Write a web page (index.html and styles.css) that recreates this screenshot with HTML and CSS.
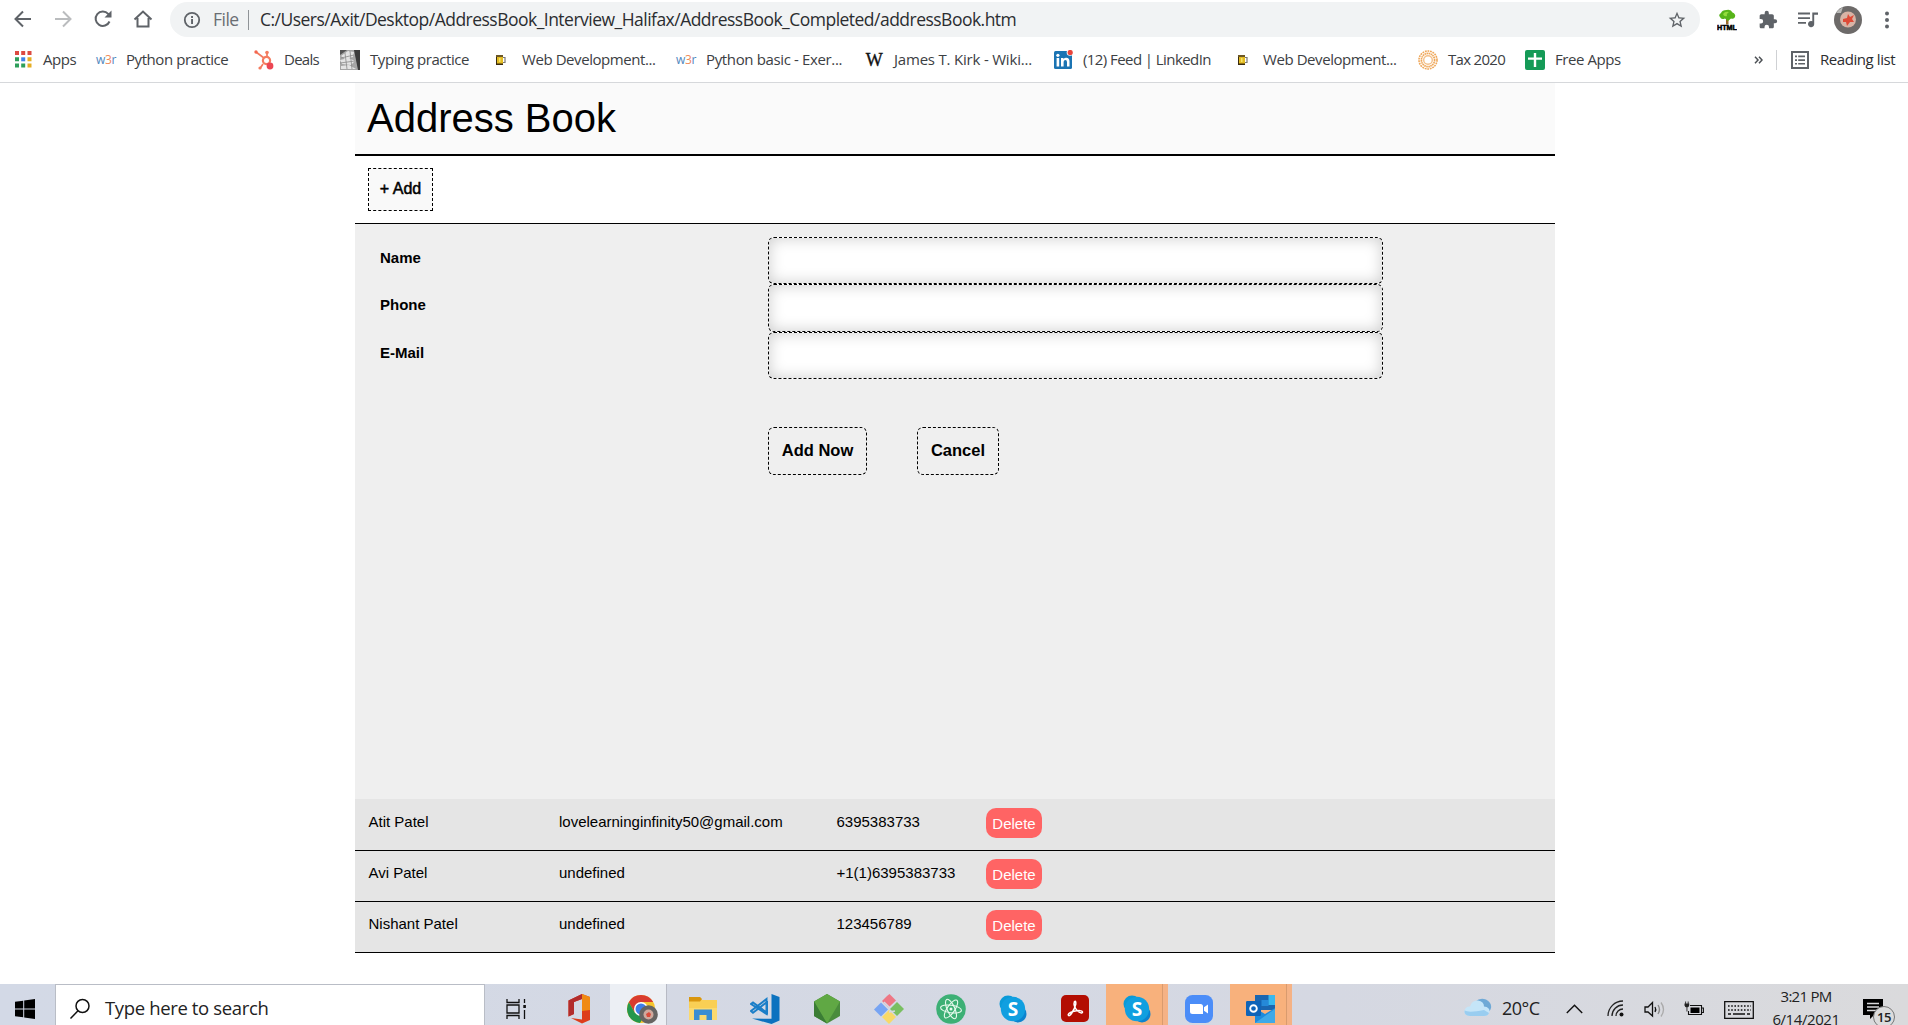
FILE: index.html
```html
<!DOCTYPE html>
<html lang="en">
<head>
<meta charset="utf-8">
<title>Address Book</title>
<link rel="stylesheet" href="styles.css">
</head>
<body>
<div class="screen">
  <header class="browser">
    <div class="toolbar">
      <div class="nav-icons">
        <svg width="20" height="20" viewBox="0 0 20 20" fill="none" stroke="#5f6368" stroke-width="2"><path d="M18 10H3M10 2.500L2.500 10L10 17.500"/></svg>
        <svg width="20" height="20" viewBox="0 0 20 20" fill="none" stroke="#babcbe" stroke-width="2"><path d="M2 10H17M10 2.500L17.500 10L10 17.500"/></svg>
        <svg width="20" height="20" viewBox="0 0 20 20" fill="none" stroke="#5f6368" stroke-width="2"><path d="M16.500 12.500A7.200 7.200 0 1 1 15.200 4.900L17 7"/><path d="M18.500 1.500V8.500H11.500Z" fill="#5f6368" stroke="none"/></svg>
        <svg width="20" height="20" viewBox="0 0 20 20" fill="none" stroke="#5f6368" stroke-width="2"><path d="M1.500 10.500L10 2.500L18.500 10.500M4.500 9V17.500H15.500V9"/></svg>
      </div>
      <div class="omnibox">
        <svg width="18" height="18" viewBox="0 0 18 18"><circle cx="9" cy="9" r="7.200" fill="none" stroke="#5f6368" stroke-width="1.800"/><path d="M8.100 8h1.900v5H8.100zM8.100 5h1.900v1.900H8.100z" fill="#5f6368"/></svg>
        <span class="scheme">File</span>
        <span class="bar"></span>
        <span class="url">C:/Users/Axit/Desktop/AddressBook_Interview_Halifax/AddressBook_Completed/addressBook.htm</span>
        <svg class="star" width="20" height="20" viewBox="0 0 24 24" fill="#5f6368"><path d="M22 9.240l-7.190-.620L12 2 9.190 8.630 2 9.240l5.460 4.730L5.820 21 12 17.270 18.180 21l-1.630-7.030L22 9.240zM12 15.400l-3.760 2.270 1-4.280-3.320-2.880 4.380-.380L12 6.100l1.710 4.040 4.380.380-3.320 2.880 1 4.280L12 15.400z"/></svg>
      </div>
      <div class="ext-icons">
        <svg width="20" height="22" viewBox="0 0 20 22"><path d="M9 8h2.500v7.500H9z" fill="#9b6a2a"/><path d="M3 8Q1 6 4 4Q5 1 9.500 1Q14 0 15.500 3.500Q19 5 18 8Q17 10.500 14 9.500L11 12 8 9.500Q4 11 3 8Z" fill="#57b41a"/><path d="M6 5Q8 2 12 3Q9 5 10 7Q7 8 6 5Z" fill="#93dd3d"/><text x="0" y="20.500" textLength="20" lengthAdjust="spacingAndGlyphs" class="html-tag">HTML</text></svg>
        <svg width="20" height="20" viewBox="0 0 24 24" fill="#5f6368"><path d="M20.500 11H19V7c0-1.100-.900-2-2-2h-4V3.500a2.500 2.500 0 0 0-5 0V5H4c-1.100 0-2 .900-2 2v3.800h1.500a2.700 2.700 0 0 1 0 5.400H2V20c0 1.100.900 2 2 2h3.800v-1.500a2.700 2.700 0 0 1 5.400 0V22H17c1.100 0 2-.900 2-2v-4h1.500a2.500 2.500 0 0 0 0-5z"/></svg>
        <svg width="20" height="18" viewBox="0 0 20 18" fill="#5f6368"><path d="M0 1.500h12v1.900H0zM0 6.200h12v1.900H0zM0 10.900h8v1.900H0z"/><path d="M14.300 1.500H20v2.200h-3.800v9.500a3.100 3.100 0 1 1-1.900-2.900z"/></svg>
        <svg width="28" height="28" viewBox="0 0 28 28"><circle cx="14" cy="14" r="14" fill="#6d6a69"/><path d="M2 7Q5 3 9 1L7 7Z" fill="#b9b9b7"/><circle cx="14" cy="13.500" r="8" fill="#d8b3a5"/><path d="M9 13l4-1 1-4 2 3 4-2-2 4 2 3-4 0-3 4-1-4-3 0z" fill="#de4a37"/></svg>
        <svg width="6" height="20" viewBox="0 0 6 20" fill="#5f6368"><circle cx="3" cy="3.500" r="2"/><circle cx="3" cy="10" r="2"/><circle cx="3" cy="16.500" r="2"/></svg>
      </div>
    </div>
    <nav class="bookmarks">
      <a class="bm"><svg width="20" height="20" viewBox="0 0 20 20"><path d="M2 1h4v4H2z M8.200 1h4v4h-4z M14.500 1h4v4h-4z" fill="#dc4a42"/><path d="M2 7.300h4v4H2zM2 13.600h4v4H2zM8.200 13.600h4v4h-4z" fill="#2d9f5b"/><path d="M8.200 7.300h4v4h-4z" fill="#3f83e8"/><path d="M14.500 7.300h4v4h-4zM14.500 13.600h4v4h-4z" fill="#e5ad23"/></svg><span>Apps</span></a>
      <a class="bm"><b class="w3r">w<i>3</i>r</b><span>Python practice</span></a>
      <a class="bm"><svg width="20" height="20" viewBox="0 0 20 20" fill="none" stroke="#f47b5f" stroke-width="1.700"><path d="M2 2L10 8M13 2.500V7M9 14L6 18.500"/><circle cx="12.500" cy="10.500" r="3.600" stroke-width="2.200"/><circle cx="2" cy="2" r="1.700" fill="#f4664f" stroke="none"/><circle cx="13" cy="2.500" r="1.800" fill="#f47b5f" stroke="none"/><circle cx="6" cy="18" r="1.600" fill="#f47b5f" stroke="none"/><circle cx="16" cy="16" r="3.400" fill="#ec4653" stroke="none"/></svg><span class="deals">Deals</span></a>
      <a class="bm"><svg width="20" height="20" viewBox="0 0 20 20"><path d="M0 0h20v20H0z" fill="#a5a5a5"/><path d="M14 0h6v20h-2z" fill="#3b3b3b"/><path d="M0 0h7L0 5z" fill="#555"/><path d="M1 6L8 1l6 1-1 5-8 2zM0 10l9-2 6 3-4 4-9-1zM1 16l8-1 7 4H1z" fill="#e4e4e4"/><path d="M5 3l2 16M1 8l13-3M0 13l15-2M10 1l2 18" stroke="#8a8a8a" stroke-width=".8" fill="none"/></svg><span>Typing practice</span></a>
      <a class="bm"><svg width="20" height="20" viewBox="0 0 20 20"><path d="M11 7.500h2v5h-2" fill="none" stroke="#777" stroke-width="1.200"/><path d="M4 5h7v10H4z" fill="#e3bb22"/><path d="M4 5h7v2H4z" fill="#6c5725"/><path d="M4 13.500h7V15H4zM4 7h1v7H4z" fill="#3a2b0e"/><path d="M7 8h1.500v4H7z" fill="#f6e46a"/></svg><span>Web Development...</span></a>
      <a class="bm"><b class="w3r">w<i>3</i>r</b><span class="py">Python basic - Exer...</span></a>
      <a class="bm"><b class="wiki">W</b><span class="kirk">James T. Kirk - Wiki...</span></a>
      <a class="bm"><svg width="20" height="20" viewBox="0 0 20 20"><rect x="1" y="1" width="18" height="18" rx="1.500" fill="#1b74b3"/><path d="M3.600 8h2.600v8.400H3.600zM8 8h2.500v1.200Q11.500 7.700 13.300 7.800Q16.500 8 16.500 11.500V16.400H14v-4.500Q14 10 12.400 10Q10.600 10 10.600 12V16.400H8z" fill="#fff"/><circle cx="4.900" cy="5.300" r="1.600" fill="#fff"/><circle cx="17" cy="2.500" r="3.300" fill="#fff"/><circle cx="17.200" cy="2.500" r="2.600" fill="#e8453c"/></svg><span class="feed">(12) Feed | LinkedIn</span></a>
      <a class="bm"><svg width="20" height="20" viewBox="0 0 20 20"><path d="M12 7.500h2v5h-2" fill="none" stroke="#777" stroke-width="1.200"/><path d="M5 5h7v10H5z" fill="#e3bb22"/><path d="M5 5h7v2H5z" fill="#6c5725"/><path d="M5 13.500h7V15H5zM5 7h1v7H5z" fill="#3a2b0e"/><path d="M8 8h1.500v4H8z" fill="#f6e46a"/></svg><span>Web Development...</span></a>
      <a class="bm"><svg width="20" height="20" viewBox="0 0 20 20" fill="none" stroke="#efa759"><circle cx="10" cy="10" r="9" stroke-width="1.600" stroke-dasharray="1.800 .8"/><circle cx="10" cy="10" r="6.600" stroke-width="1.700" stroke-dasharray="1.600 .5"/><circle cx="10" cy="10" r="4.300" stroke-width="1.400" stroke="#f3c08a"/></svg><span class="tax">Tax 2020</span></a>
      <a class="bm"><svg width="20" height="20" viewBox="0 0 20 20"><rect width="20" height="20" rx="2" fill="#159a57"/><path d="M8.800 3h2.400v14H8.800zM3 7.500h14v2.300H3z" fill="#fff"/></svg><span>Free Apps</span></a>
      <div class="bm-end">
        <svg width="9" height="8" viewBox="0 0 9 8" fill="none" stroke="#4d5156" stroke-width="1.500"><path d="M1 .8L4 4L1 7.200M5 .8L8 4L5 7.200"/></svg>
        <span class="sep"></span>
        <svg width="18" height="18" viewBox="0 0 18 18" fill="#5f6368"><path d="M0 0h18v18H0zM2 2v14h14V2z" fill-rule="evenodd"/><path d="M4 4.500h2v1.700H4zM4 8.200h2v1.700H4zM4 11.900h2v1.700H4zM7.200 4.500H14v1.700H7.200zM7.200 8.200H14v1.700H7.200zM7.200 11.900H14v1.700H7.200z"/></svg>
        <span class="rl">Reading list</span>
      </div>
    </nav>
  </header>

  <main class="page">
    <h1 class="title">Address Book</h1>
    <div class="actions"><button class="add" type="button">+ Add</button></div>
    <form class="entry">
      <label for="name">Name</label><input id="name" type="text">
      <label for="phone">Phone</label><input id="phone" type="text">
      <label for="email">E-Mail</label><input id="email" type="text">
      <div class="form-buttons">
        <button type="button">Add Now</button>
        <button type="button">Cancel</button>
      </div>
    </form>
    <section class="list">
      <div class="row"><span>Atit Patel</span><span>lovelearninginfinity50@gmail.com</span><span>6395383733</span><button type="button">Delete</button></div>
      <div class="row"><span>Avi Patel</span><span>undefined</span><span>+1(1)6395383733</span><button type="button">Delete</button></div>
      <div class="row"><span>Nishant Patel</span><span>undefined</span><span>123456789</span><button type="button">Delete</button></div>
    </section>
  </main>

  <footer class="taskbar">
    <div class="start"><svg width="20" height="20" viewBox="0 0 20 20"><path d="M0 2.800L8.200 1.700V9.500H0zM9.200 1.500L20 0V9.500H9.200zM0 10.500H8.200V18.300L0 17.200zM9.200 10.500H20V20L9.200 18.500z"/></svg></div>
    <div class="search">
      <svg width="22" height="22" viewBox="0 0 22 22" fill="none" stroke="#111" stroke-width="1.500"><circle cx="13.500" cy="8" r="6.500"/><path d="M9 12.800L1.500 20.500"/></svg>
      <span>Type here to search</span>
    </div>
    <div class="apps">
      <div class="app"><svg width="20" height="20" viewBox="0 0 20 20" fill="none" stroke="#111" stroke-width="1.300"><path d="M1 0V3.500H13V0M1 20V16.500H13V20M1 6H13V14H1zM18.500 0V4M18.500 11V20"/><path d="M17.300 6h2.600v3h-2.600z" fill="#111" stroke="none"/></svg></div>
      <div class="app"><svg width="24" height="30" viewBox="0 0 24 30"><path d="M15 0L23 3V26L15 29.500L4 24L15 25.500V5L7 8V20L1.500 22.500V6.500Z" fill="#dd3d1b"/><path d="M15 0L23 3V16L15 17Z" fill="#f08a13"/><path d="M15 0L1.500 6.500V22.500L7 20V8L15 5Z" fill="#b22c2c"/></svg></div>
      <div class="app active"><svg width="32" height="30" viewBox="0 0 32 30"><circle cx="15" cy="15" r="14" fill="#f7c52d"/><path d="M2.800 8.200A14 14 0 0 1 27.200 8H15L9 19Z" fill="#d93b2f"/><path d="M2.800 8.200A14 14 0 0 0 14 29L20 19H9Z" fill="#24974d"/><circle cx="15" cy="15" r="7" fill="#fff"/><circle cx="15" cy="15" r="5.500" fill="#3f7ee8"/><circle cx="22.500" cy="20.500" r="9.300" fill="#666462"/><circle cx="22.500" cy="20.500" r="5" fill="#cfa99d"/><path d="M20 20l3-2 2 2-1 3-3 0z" fill="#d94b3a"/></svg></div>
      <div class="app"><svg width="28" height="26" viewBox="0 0 28 26"><path d="M0 1H11L13 4H28V24H0z" fill="#f9cf54"/><path d="M0 1H11L13 3L11 5.500H0z" fill="#d9960e"/><path d="M0 12H28V24H0z" fill="#fbd96e"/><path d="M5 24V13.500H23V24H17.500V19H10.500V24z" fill="#3a8dd2"/></svg></div>
      <div class="app"><svg width="30" height="30" viewBox="0 0 30 30"><path d="M21.500 0L29.500 3V26.500L21.500 30L2 24.500L21.500 24.800Z" fill="#0b72bf"/><path d="M17 7V18.800L3 8.500L1 10L16.500 20V5L1 17L3 18.800L17 8" fill="none" stroke="#1a7ec8" stroke-width="2"/></svg></div>
      <div class="app"><svg width="28" height="30" viewBox="0 0 28 30"><path d="M14 0L27 7.500V22L14 29.500L1 22V7.500Z" fill="#4a8c3c"/><path d="M14 0L27 7.500L14 29.500L1 7.500Z" fill="#60a844"/><path d="M1 7.500L14 29.500L1 22Z" fill="#3b7d35"/></svg></div>
      <div class="app"><svg width="30" height="30" viewBox="0 0 30 30"><path d="M13 2L15.500 0L22 6.500L14.500 13.500L8 7Z" fill="#ee7785"/><path d="M23 8L30 15L23 22L16 15Z" fill="#79bf61"/><path d="M7 8.500L14 15.500L7 22.500L0 15.500Z" fill="#77a4f3"/><path d="M15 16L22 23L15 30L8 23Z" fill="#f8d968"/><path d="M10 8L16 14M21 17L15 18" stroke="#d5d8e2" stroke-width="1.500"/></svg></div>
      <div class="app"><svg width="30" height="30" viewBox="0 0 30 30"><circle cx="15" cy="15" r="14.800" fill="#3db075"/><g fill="none" stroke="#e9fbef" stroke-width="1.100"><ellipse cx="15" cy="15" rx="10.500" ry="3.800" transform="rotate(8 15 15)"/><ellipse cx="15" cy="15" rx="10.500" ry="3.800" transform="rotate(66 15 15)"/><ellipse cx="15" cy="15" rx="10.500" ry="3.800" transform="rotate(124 15 15)"/></g><circle cx="15" cy="15" r="1.500" fill="#e9fbef"/></svg></div>
      <div class="app"><svg width="28" height="28" viewBox="0 0 28 28"><circle cx="9" cy="9" r="8.500" fill="#0a9ad8"/><circle cx="19" cy="19" r="8.500" fill="#0b83cf"/><circle cx="14" cy="14" r="12.200" fill="#109fe0"/><text x="14" y="20.500" class="skype-s">S</text></svg></div>
      <div class="app"><svg width="28" height="27" viewBox="0 0 28 27"><rect width="28" height="27" rx="5" fill="#b30d02"/><path d="M7.500 20.500Q6 18.500 12 16.500Q21 14.500 21.500 17Q21 19.500 16 15.500Q12 10.500 13.500 6.500Q15 5.500 14.800 9Q14 13.500 10.500 18.500Q8.500 21.300 7.500 20.500Z" fill="none" stroke="#fff" stroke-width="1.500"/></svg></div>
      <div class="app alert"><svg width="28" height="28" viewBox="0 0 28 28"><circle cx="9" cy="9" r="8.500" fill="#0a9ad8"/><circle cx="19" cy="19" r="8.500" fill="#0b83cf"/><circle cx="14" cy="14" r="12.200" fill="#109fe0"/><text x="14" y="20.500" class="skype-s">S</text></svg></div>
      <div class="app"><svg width="28" height="28" viewBox="0 0 28 28"><rect width="28" height="28" rx="7.500" fill="#4b8df8"/><path d="M5 9H15.500Q18 9 18 11.500V19H7.500Q5 19 5 16.500zM19 12.300L23 9.500V18.500L19 15.800z" fill="#fff"/></svg></div>
      <div class="app alert"><svg width="30" height="28" viewBox="0 0 30 28"><path d="M9 0H29V15H9z" fill="#1a66b0"/><path d="M15.500 5H22.500V11H15.500z" fill="#2589d8"/><path d="M22.500 0H29V10H22.500z" fill="#38b8ee"/><path d="M9 13L19 19L29 13V28H9z" fill="#1c8bdc"/><path d="M9 28L29 14V28z" fill="#3fa9e8"/><rect y="6" width="15" height="15" rx="1.200" fill="#0f64b8"/><circle cx="7.500" cy="13.500" r="3.300" fill="none" stroke="#fff" stroke-width="1.900"/></svg></div>
    </div>
    <div class="tray">
      <svg class="cloud" width="28" height="20" viewBox="0 0 28 20"><path d="M11 4Q16-1 22 1.500Q28 5 27 10Q26 15 20 14Z" fill="#6fa9d6"/><path d="M6 18Q0 17.500 .5 12.500Q2 8 6 8.500Q8 2 14 2.500Q20 3.500 20 8.500Q26 9 25.500 14Q24.500 18 20 18Z" fill="#c5e5f8"/><path d="M6 18Q0 17.500 .5 12.500Q5 15 20 12L25 15Q24 18 20 18Z" fill="#99cdf0"/></svg>
      <span class="temp">20°C</span>
      <svg class="chev" width="17" height="10" viewBox="0 0 17 10" fill="none" stroke="#111" stroke-width="1.400"><path d="M.8 9L8.500 1.200L16.200 9"/></svg>
      <svg class="wifi" width="17" height="17" viewBox="0 0 17 17" fill="none" stroke="#222" stroke-width="1.300"><path d="M1 16A15 15 0 0 1 16 1M5 16A11 11 0 0 1 16 5M9 16A7 7 0 0 1 16 9" /><circle cx="14.500" cy="14.500" r="2" fill="#111" stroke="none"/></svg>
      <svg class="vol" width="21" height="17" viewBox="0 0 21 17" fill="none" stroke="#111" stroke-width="1.300"><path d="M1 6H4L8.500 1.500V15L4 11H1z"/><path d="M11 6Q12.500 8.500 11 11"/><path d="M14 4Q17 8.500 14 13" stroke="#888"/><path d="M17 1.500Q22 8.500 17 15.500" stroke="#aaa"/></svg>
      <svg class="bat" width="20" height="15" viewBox="0 0 20 15"><path d="M6 4.500H17.500V13.500H4.500V10M17.500 7H19.400V11.500H17.500" fill="none" stroke="#111" stroke-width="1.100"/><path d="M6.500 6.500H15.500V12H6.500z"/><path d="M.5 2.500H5.200V4.500Q4.800 6.500 3 6.500Q1 6.500 .5 4.500zM1.200 .5h.9v2h-.9zM3.700 .5h.9v2h-.9zM2.500 6.500h.9v4h-.9z" fill="#222"/></svg>
      <svg class="kbd" width="30" height="18" viewBox="0 0 30 18" fill="none" stroke="#111" stroke-width="1.300"><path d="M.7 .7H29.300V17.300H.7z"/><path d="M4 5H27M4 9H27" stroke-dasharray="1.600 1.600"/><path d="M4 13H7M9 13H21M23 13H26"/></svg>
      <div class="clock"><span class="time">3:21 PM</span><span class="date">6/14/2021</span></div>
      <div class="notif">
        <svg width="20" height="20" viewBox="0 0 20 20"><path d="M0 0H20V16H11L7 20V16H0z"/><path d="M4 4.500H16M4 8H16M4 11.500H16" stroke="#d9d9dc" stroke-width="1.300"/></svg>
        <span class="count">15</span>
      </div>
    </div>
  </footer>
</div>
</body>
</html>
```

FILE: styles.css
```css
* { box-sizing: border-box; }
body {
  margin: 0;
  background: #fff;
  font-family: "Liberation Sans", Arial, sans-serif;
  color: #000;
}
svg { display: block; flex: none; }
button { font-family: inherit; color: #000; padding: 0; margin: 0; }
.screen {
  width: 1908px;
  height: 1025px;
  overflow: hidden;
  display: flex;
  flex-direction: column;
}

/* Browser chrome */
.browser {
  height: 83px;
  flex: none;
  border-bottom: 1px solid #d6d8db;
  font-family: "Open Sans", "Noto Sans", sans-serif;
}
.toolbar {
  height: 39px;
  padding-top: 2px;
  display: flex;
}
.nav-icons {
  width: 170px;
  padding: 7px 0 0 13px;
  display: flex;
  gap: 20px;
}
.omnibox {
  width: 1530px;
  height: 35px;
  border-radius: 18px;
  background: #f1f3f4;
  padding: 0 13px 0 13px;
  display: flex;
  align-items: center;
  font-size: 17.5px;
  letter-spacing: -0.520px;
  white-space: nowrap;
}
.scheme { color: #6a6e73; width: 35px; margin-left: 12px; padding-bottom: 1px; }
.bar { width: 1px; height: 20px; background: #8f9397; margin-right: 11px; }
.url { color: #2b2d30; padding-bottom: 1px; }
.star { margin-left: auto; }
.ext-icons {
  display: flex;
  height: 35px;
  align-items: center;
  padding-left: 17px;
}
.ext-icons svg:nth-child(2) { margin-left: 21px; }
.ext-icons svg:nth-child(3) { margin-left: 20px; }
.ext-icons svg:nth-child(4) { margin-left: 16px; }
.ext-icons svg:nth-child(5) { margin-left: 22px; }
.html-tag { font: 900 7px "Liberation Sans", sans-serif; stroke: #000; stroke-width: .5px; }

.bookmarks {
  height: 42px;
  padding-left: 13px;
  display: grid;
  grid-template-columns: 83px 158px 86px 152px 184px 188px 189px 180px 185px 107px 1fr auto;
  font-size: 15px;
  letter-spacing: -0.43px;
  color: #3c4043;
  white-space: nowrap;
}
.bm { display: flex; align-items: center; gap: 10px; }
.bm span, .rl { padding-bottom: 2px; }
.bm .deals { letter-spacing: -0.75px; }
.bm .py { letter-spacing: -0.36px; }
.bm .kirk { letter-spacing: -0.2px; }
.bm .feed { letter-spacing: -0.57px; }
.bm .tax { letter-spacing: -0.7px; }
.w3r { width: 20px; font-size: 12px; font-weight: 400; letter-spacing: -0.3px; color: #4f86bd; text-align: center; padding-bottom: 1px; }
.w3r i { font-style: normal; color: #f08a5a; }
.wiki { width: 20px; font: 400 18px "Liberation Serif", serif; text-align: center; color: #111; -webkit-text-stroke: .4px #111; }
.bm-end { display: flex; align-items: center; padding-right: 12px; }
.sep { width: 1px; height: 20px; background: #cfd1d4; margin: 0 14px 0 13px; }
.rl { margin-left: 11px; width: 76px; color: #2b2d30; }

/* Address book */
.page {
  width: 1200px;
  margin-left: 355px;
  height: 901px;
  flex: none;
}
.title {
  margin: 0;
  height: 73px;
  padding: 11px 12px 0;
  font-size: 40px;
  line-height: 48px;
  font-weight: 400;
  background: #fafafa;
  border-bottom: 2px solid #000;
}
.actions {
  height: 68px;
  padding: 12px 13px;
  border-bottom: 1px solid #000;
}
.add {
  display: block;
  width: 65px;
  height: 43px;
  border: 1px dashed #000;
  background: #f9f9f9;
  font-size: 16px;
  padding-bottom: 2px;
  -webkit-text-stroke: .5px #000;
}
.entry {
  height: 575px;
  padding: 13px 0 0 25px;
  background: #efefef;
  display: grid;
  grid-template-columns: 388px 615px;
  grid-template-rows: 47px 48px 47px auto;
  align-content: start;
}
.entry label { font-size: 15px; font-weight: 700; line-height: 17px; padding-top: 12px; }
.entry input {
  width: 615px;
  height: 100%;
  border: 1px dashed #000;
  border-radius: 6px;
  background: #fff;
  box-shadow: inset 0 0 15px #ccc;
  padding: 0 10px;
  font-size: 15px;
}
.form-buttons {
  grid-column: 2;
  margin-top: 48px;
  height: 48px;
  display: flex;
  gap: 50px;
}
.form-buttons button {
  width: 99px;
  border: 1px dashed #000;
  border-radius: 6px;
  background: transparent;
  font-size: 16.5px;
  font-weight: 700;
  padding-bottom: 2px;
}
.form-buttons button + button { width: 82px; }
.row {
  height: 51px;
  padding: 8px 13px 0 13.5px;
  background: #e5e5e5;
  border-bottom: 1px solid #000;
  display: grid;
  grid-template-columns: 190.500px 277.500px 149.500px auto;
  justify-content: start;
  align-items: start;
  font-size: 15px;
}
.row:first-child { height: 52px; padding-top: 9px; }
.row span { line-height: 17px; padding-top: 5px; }
.row button {
  width: 56px;
  height: 30px;
  border: 0;
  border-radius: 10px;
  background: #ff6464;
  color: #fff;
  font-size: 15px;
}

/* Taskbar */
.taskbar {
  height: 41px;
  flex: none;
  display: flex;
  background: linear-gradient(90deg, #d3d9e6, #d5d8e2 70%, #dadadc);
  font-family: "Open Sans", "Noto Sans", sans-serif;
  color: #222;
}
.start { width: 55px; padding: 15px 0 0 15px; }
.search {
  width: 430px;
  height: 50px;
  border: 1px solid #b9bdc6;
  background: #fff;
  padding: 13px 0 0 13px;
  display: flex;
  gap: 14px;
  font-size: 18.5px;
  line-height: 20px;
  letter-spacing: -0.36px;
}
.apps { display: flex; height: 50px; }
.app { width: 62px; display: flex; align-items: center; justify-content: center; }
.app svg { margin-bottom: 1px; }
.app:first-child { padding-right: 2px; width: 63px; }
.app.active {
  background: #eceff4;
  border-right: 1px solid #b7bac4;
  width: 57px;
  margin-right: 5px;
  padding-left: 7px;
}
.app.alert { background: linear-gradient(90deg, #f8b17c 56px, #d99b6e 56px 57px, #f5b285 57px); }
.tray { flex: 1; display: flex; align-items: flex-start; }
.cloud { margin: 14px 0 0 172px; }
.temp { margin: 12px 0 0 10px; width: 38px; font-size: 18px; line-height: 25px; letter-spacing: -0.5px; }
.chev { margin: 20px 0 0 26px; }
.wifi { margin: 16px 0 0 24px; }
.vol { margin: 17px 0 0 20px; }
.bat { margin: 17px 0 0 19px; }
.kbd { margin: 17px 0 0 20px; }
.clock { width: 68px; margin: 1px 0 0 18px; display: flex; flex-direction: column; align-items: center; font-size: 15px; line-height: 23px; letter-spacing: -0.43px; white-space: nowrap; }
.time { letter-spacing: -0.75px; }
.notif { position: relative; margin: 15px 0 0 23px; }
.count {
  position: absolute;
  left: 10px;
  top: 7px;
  width: 22px;
  height: 22px;
  border: 1px solid #777;
  border-radius: 50%;
  background: #dcdcdd;
  font-size: 13px;
  line-height: 20px;
  font-weight: 600;
  text-align: center;
  letter-spacing: -0.5px;
}
.skype-s { font: 700 19px "Open Sans", sans-serif; fill: #fff; text-anchor: middle; }
```
